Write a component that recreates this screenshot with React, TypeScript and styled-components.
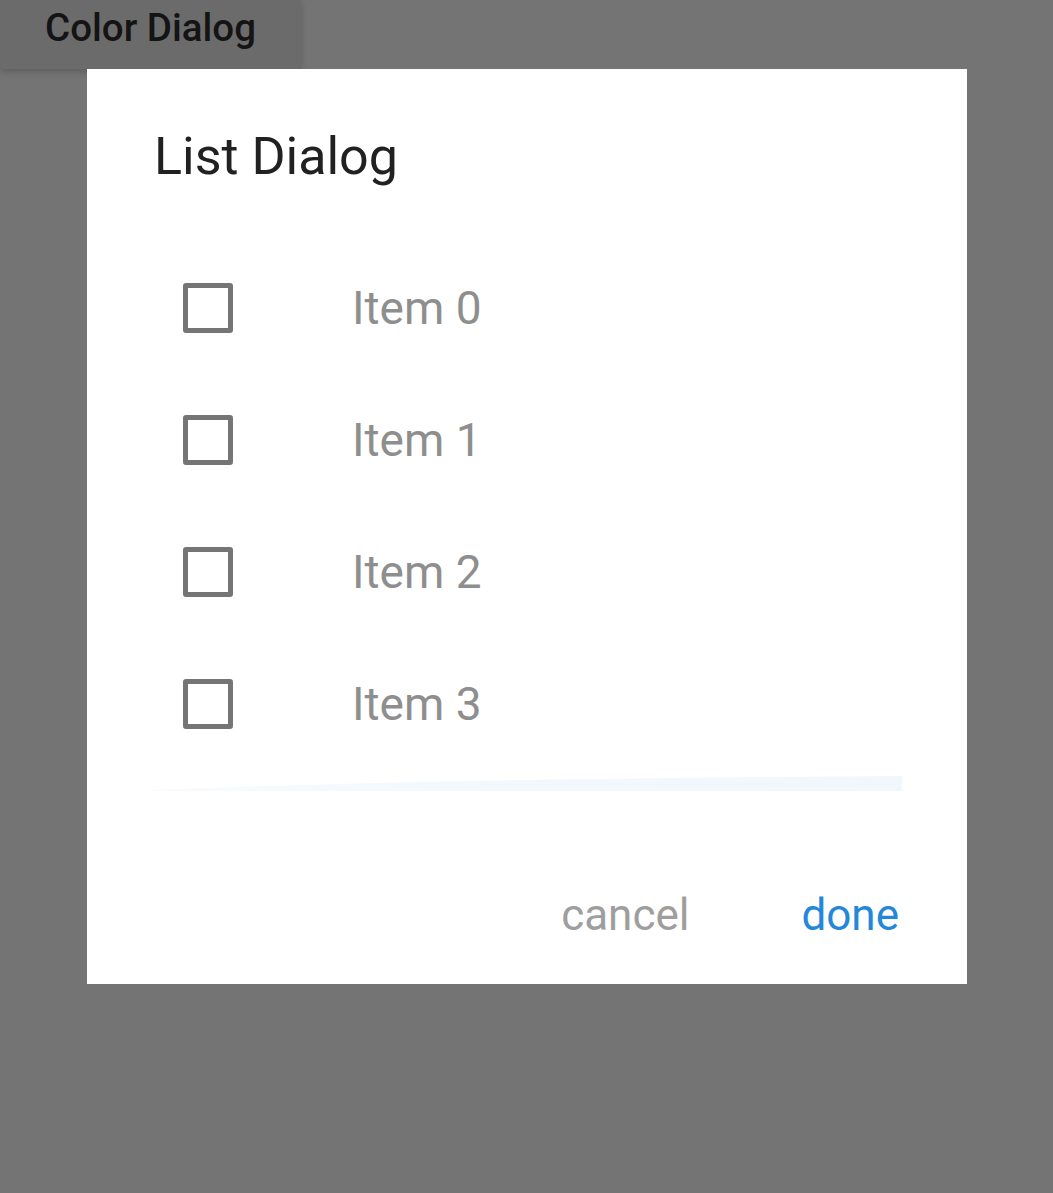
import React, { useState } from 'react';
import styled, { createGlobalStyle } from 'styled-components';

const GlobalStyle = createGlobalStyle`
  html, body {
    margin: 0;
    padding: 0;
    background: #747474;
    font-family: Roboto, "Liberation Sans", sans-serif;
  }
`;

const Page = styled.div`
  width: 1053px;
  height: 1193px;
  display: flex;
  flex-direction: column;
  align-items: flex-start;
  overflow: hidden;
`;

const RaisedButton = styled.button`
  height: 69px;
  width: 301px;
  padding: 0 0 14px 0;
  border: none;
  border-radius: 0 0 4px 4px;
  background: #6b6b6b;
  box-shadow: 0 3px 6px rgba(0, 0, 0, 0.18);
  font-family: Roboto, "Liberation Sans", sans-serif;
  font-size: 38.5px;
  font-weight: 500;
  color: #141414;
  display: flex;
  align-items: center;
  justify-content: center;
`;

const Dialog = styled.div`
  position: relative;
  margin-left: 87px;
  width: 880px;
  height: 915px;
  box-sizing: border-box;
  background: #ffffff;
  display: flex;
  flex-direction: column;
  padding-top: 57px;
`;

const Title = styled.h2`
  margin: 0 0 55px 67px;
  font-size: 52px;
  line-height: 61px;
  font-weight: 400;
  color: #212121;
`;

const List = styled.div`
  display: flex;
  flex-direction: column;
`;

const Row = styled.label`
  height: 132px;
  display: flex;
  align-items: center;
  cursor: pointer;
`;

const Box = styled.span<{ $checked: boolean }>`
  margin-left: 96px;
  width: 50px;
  height: 50px;
  box-sizing: border-box;
  border: 5px solid ${(p) => (p.$checked ? '#1e88e5' : '#757575')};
  background: ${(p) => (p.$checked ? '#1e88e5' : 'transparent')};
  border-radius: 3px;
`;

const ItemText = styled.span`
  margin-left: 119px;
  font-size: 46px;
  color: #8e8e8e;
`;

const Glow = styled.svg`
  display: block;
  margin: 6px 0 0 65px;
`;

const Actions = styled.div`
  margin-top: 73px;
  height: 100px;
  display: flex;
  align-items: center;
  justify-content: flex-end;
  gap: 112px;
  padding-right: 68px;
`;

const ActionButton = styled.button<{ $primary?: boolean }>`
  border: none;
  background: none;
  padding: 0;
  font-family: Roboto, "Liberation Sans", sans-serif;
  font-size: 44px;
  color: ${(p) => (p.$primary ? '#2587d9' : '#9e9e9e')};
`;

export default function App() {
  const [checked, setChecked] = useState<boolean[]>([false, false, false, false]);

  const toggle = (i: number) =>
    setChecked((c) => c.map((v, j) => (j === i ? !v : v)));

  return (
    <Page>
      <GlobalStyle />
      <RaisedButton>Color Dialog</RaisedButton>
      <Dialog>
        <Title>List Dialog</Title>
        <List>
          {checked.map((v, i) => (
            <Row key={i} onClick={() => toggle(i)}>
              <Box $checked={v} />
              <ItemText>Item {i}</ItemText>
            </Row>
          ))}
        </List>
        <Glow width="750" height="16" viewBox="0 0 750 16">
          <defs>
            <linearGradient id="glow" x1="0" x2="1" y1="0" y2="0">
              <stop offset="0" stopColor="#f8fbfe" />
              <stop offset="0.5" stopColor="#f2f8fd" />
              <stop offset="1" stopColor="#f1f7fd" />
            </linearGradient>
          </defs>
          <path d="M0 14 Q 300 2 750 0 L750 15 L0 15 Z" fill="url(#glow)" />
        </Glow>
        <Actions>
          <ActionButton>cancel</ActionButton>
          <ActionButton $primary>done</ActionButton>
        </Actions>
      </Dialog>
    </Page>
  );
}
